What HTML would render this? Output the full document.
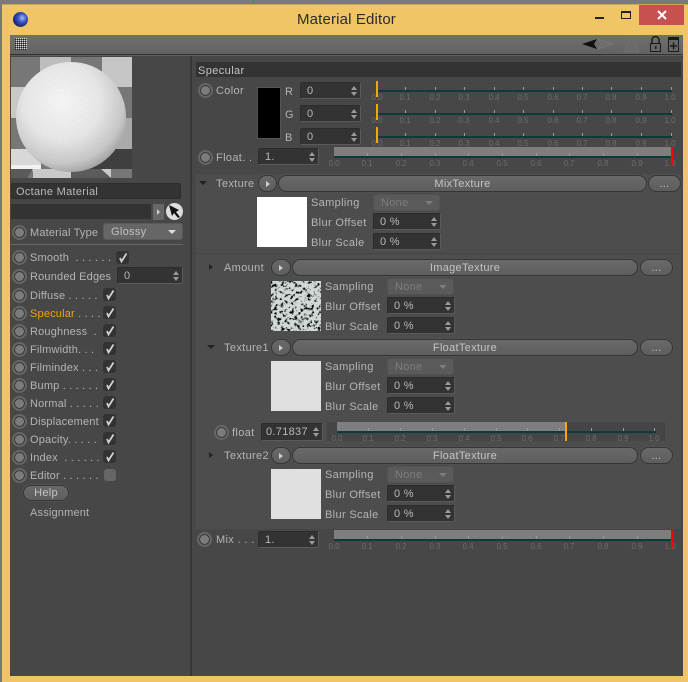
<!DOCTYPE html>
<html><head><meta charset="utf-8"><style>
html,body{margin:0;padding:0;background:#777}
#w{position:relative;width:688px;height:682px;overflow:hidden;background:#777;font:11px "Liberation Sans",sans-serif;color:#b4b4b4}
#w div,#w span{position:absolute;box-sizing:border-box}
.l{white-space:pre;line-height:14px;height:14px;letter-spacing:.35px;margin-top:1px}
.s{letter-spacing:.18px}
.r{width:15px;height:15px;border-radius:50%;background:#7c7c7c;border:2px solid #666;box-shadow:inset 0 0 0 1px #363636}
.f{background:#333;border:1px solid #2c2c2c;border-right-color:#5a5a5a;border-bottom-color:#5a5a5a;border-radius:2px;line-height:15px;padding-left:6px;padding-top:1px;color:#b8b8b8;letter-spacing:.3px}
.f i{position:absolute;right:3px;top:3px;width:0;height:0;border:3px solid transparent;border-top:0;border-bottom:4px solid #9a9a9a}
.f b{position:absolute;right:3px;top:9px;width:0;height:0;border:3px solid transparent;border-bottom:0;border-top:4px solid #9a9a9a}
.d{background:#5a5a5a;border:1px solid #525252;border-radius:3px;color:#7c7c7c;line-height:15px;padding-left:7px;padding-top:1px;letter-spacing:.3px}
.d i{position:absolute;right:6px;top:6px;width:0;height:0;border:4px solid transparent;border-bottom:0;border-top:4px solid #7c7c7c}
.p{background:linear-gradient(#696969,#5e5e5e);border:1px solid #363636;box-shadow:0 0 0 1px #505050;border-radius:9px;text-align:center;line-height:16px;color:#c4c4c4;letter-spacing:.3px;height:17px}
.o{background:linear-gradient(#696969,#5e5e5e);border:1px solid #363636;box-shadow:0 0 0 1px #505050;border-radius:9px;height:17px}
.o i{position:absolute;left:7px;top:5px;width:0;height:0;border:3px solid transparent;border-right:0;border-left:4px solid #ccc}
.c{width:13px;height:13px;background:#333;border-radius:3px}
.t1{width:0;height:0;border:3px solid transparent;border-right:0;border-left:4px solid #222}
.t2{width:0;height:0;border:4px solid transparent;border-bottom:0;border-top:4px solid #222}
</style></head><body><div id="w">
<div style="left:2px;top:4px;width:686px;height:678px;background:#efc566"></div>
<div style="left:0;top:0;width:688px;height:4px;background:#7a7a7a"></div>
<div style="left:2px;top:4px;width:686px;height:1px;background:#c9a455"></div>
<div style="left:253px;top:0;width:1px;height:4px;background:#3c8f3c"></div>
<div style="left:13px;top:12px;width:15px;height:15px;border-radius:50%;background:radial-gradient(circle at 62% 40%,#a8bcf5 0,#3550c0 35%,#18246a 72%,#d0d0e0 100%)"></div>
<div class="l" style="left:297px;top:10px;font-size:15px;line-height:18px;height:18px;color:#2b2b2b;letter-spacing:.15px">Material Editor</div>
<div style="left:595px;top:17px;width:9px;height:2px;background:#222"></div>
<div style="left:621px;top:11px;width:10px;height:8px;border:1px solid #222;border-top-width:2px"></div>
<div style="left:639px;top:5px;width:45px;height:20px;background:#c75050"></div>
<svg style="position:absolute;left:0;top:0" width="688" height="30"><path d="M658 11l8 8M666 11l-8 8" stroke="#fff" stroke-width="2"/></svg>

<div style="left:10px;top:35px;width:673px;height:641px;background:#474747"></div>
<div style="left:10px;top:35px;width:673px;height:19px;background:linear-gradient(#707070,#626262)"></div>
<div style="left:10px;top:54px;width:673px;height:1px;background:#333"></div>
<div style="left:10px;top:55px;width:673px;height:1px;background:#5c5c5c"></div>
<svg style="position:absolute;left:0;top:0" width="688" height="60">
<defs><pattern id="hd" width="2" height="2" patternUnits="userSpaceOnUse"><rect width="1" height="1" fill="#ddd"/><rect x="1" y="1" width="1" height="1" fill="#222"/></pattern></defs>
<rect x="15" y="38" width="12" height="12" fill="url(#hd)"/>
<path d="M582 44l15-5-3 5 3 5z" fill="#111"/>
<path d="M598 39l15 5-15 5 3-5z" fill="#6e6e6e" stroke="#757575"/>
<path d="M632 37l-8 15h15z" fill="#6a6a6a" stroke="#727272"/>
<path d="M652 43v-3a3.500 3.500 0 0 1 7 0v3" fill="none" stroke="#1c1c1c" stroke-width="1.500"/>
<rect x="650.500" y="43.500" width="10" height="8" fill="#666" stroke="#1c1c1c"/><rect x="655" y="46" width="1.500" height="3" fill="#1c1c1c"/>
<rect x="668.500" y="37.500" width="10" height="14" fill="#666" stroke="#1c1c1c"/><rect x="668" y="37" width="11" height="3" fill="#1c1c1c"/><path d="M670 46h7M673.500 42.500v7" stroke="#1c1c1c" stroke-width="1.500"/>
</svg>
<div style="left:190px;top:56px;width:2px;height:620px;background:#363636"></div>
<div style="left:196px;top:174px;width:485px;height:355px;background:#4d4d4d"></div>
<div style="left:196px;top:253px;width:485px;height:1px;background:#454545"></div>
<div style="left:196px;top:62px;width:485px;height:15px;background:#333"></div>
<div class="l" style="left:198px;top:63px;color:#c4c4c4;letter-spacing:.4px">Specular</div>

<svg style="position:absolute;left:11px;top:57px" width="121" height="121">
<defs>
<radialGradient id="sp" cx="42%" cy="36%" r="70%"><stop offset="0" stop-color="#f8f8f8"/><stop offset=".5" stop-color="#e8e8e8"/><stop offset=".8" stop-color="#c8c8c8"/><stop offset="1" stop-color="#949494"/></radialGradient>
<filter id="gn" x="0" y="0" width="100%" height="100%"><feTurbulence type="fractalNoise" baseFrequency=".9" numOctaves="2" seed="3"/><feColorMatrix values="0 0 0 0 .4 0 0 0 0 .4 0 0 0 0 .4 1.400 0 0 0 -.55"/><feComposite in2="SourceAlpha" operator="in"/></filter>
</defs>
<rect width="121" height="121" fill="#777"/>
<rect x="29" width="31" height="30" fill="#bdbdbd"/><rect x="91" width="30" height="30" fill="#c6c6c6"/>
<rect x="0" y="30" width="30" height="31" fill="#c8c8c8"/>
<rect x="91" y="61" width="30" height="31" fill="#aaa"/>
<rect x="0" y="92" width="30" height="22" fill="#d8d8d8"/><rect x="0" y="108" width="30" height="4" fill="#f2f2f2"/>
<rect x="60" y="92" width="61" height="20" fill="#3f3f3f"/>
<path d="M22 112h38v9H22zM90 112h31v9H100z" fill="#c9c9c9"/><path d="M0 112h22l-6 9H0zM60 112h30l10 9H60z" fill="#5b5b5b"/>
<rect x="100" y="112" width="21" height="9" fill="#777"/>
<circle cx="60" cy="60" r="55" fill="url(#sp)"/>
<circle cx="60" cy="60" r="55" filter="url(#gn)" opacity=".3"/>
</svg>

<div class="f" style="left:11px;top:183px;width:170px;height:16px;border-color:#2d2d2d;padding-left:4px;line-height:14px">Octane Material</div>
<div style="left:11px;top:204px;width:140px;height:15px;background:#333"></div>
<div style="left:153px;top:204px;width:11px;height:16px;background:#686868"><span style="left:4px;top:5px;width:0;height:0;border:3px solid transparent;border-right:0;border-left:3px solid #ccc"></span></div>
<div style="left:166px;top:203px;width:17px;height:17px;border-radius:50%;background:#ddd"></div>
<svg style="position:absolute;left:166px;top:203px" width="17" height="17"><path d="M3 2l10 5-3 2 4 5-2 1-4-5-2 3z" fill="#111"/></svg>

<div class="r" style="left:12px;top:225px"></div><div class="l s" style="left:30px;top:225px">Material Type</div>
<div class="d" style="left:103px;top:223px;width:80px;height:17px;background:#666;color:#c0c0c0;border-color:#5a5a5a">Glossy<i style="border-top-color:#ddd"></i></div>
<div style="left:10px;top:244px;width:173px;height:1px;background:#666"></div>

<div class="r" style="left:12px;top:250px"></div><div class="l s" style="left:30px;top:250px">Smooth  . . . . . .</div><div class="c" style="left:116px;top:251px"></div>
<div class="r" style="left:12px;top:269px"></div><div class="l s" style="left:30px;top:269px">Rounded Edges</div><div class="f" style="left:117px;top:267px;width:66px;height:17px">0<i></i><b></b></div>
<div class="r" style="left:12px;top:288px"></div><div class="l s" style="left:30px;top:288px">Diffuse . . . . .</div><div class="c" style="left:103px;top:288px"></div>
<div class="r" style="left:12px;top:306px"></div><div class="l s" style="left:30px;top:306px"><span style="position:static;color:#f0a010">Specular</span> . . . .</div><div class="c" style="left:103px;top:306px"></div>
<div class="r" style="left:12px;top:324px"></div><div class="l s" style="left:30px;top:324px">Roughness  .</div><div class="c" style="left:103px;top:324px"></div>
<div class="r" style="left:12px;top:342px"></div><div class="l s" style="left:30px;top:342px">Filmwidth. . .</div><div class="c" style="left:103px;top:342px"></div>
<div class="r" style="left:12px;top:360px"></div><div class="l s" style="left:30px;top:360px">Filmindex . . .</div><div class="c" style="left:103px;top:360px"></div>
<div class="r" style="left:12px;top:378px"></div><div class="l s" style="left:30px;top:378px">Bump . . . . . .</div><div class="c" style="left:103px;top:378px"></div>
<div class="r" style="left:12px;top:396px"></div><div class="l s" style="left:30px;top:396px">Normal . . . . .</div><div class="c" style="left:103px;top:396px"></div>
<div class="r" style="left:12px;top:414px"></div><div class="l s" style="left:30px;top:414px">Displacement</div><div class="c" style="left:103px;top:414px"></div>
<div class="r" style="left:12px;top:432px"></div><div class="l s" style="left:30px;top:432px">Opacity. . . . .</div><div class="c" style="left:103px;top:432px"></div>
<div class="r" style="left:12px;top:450px"></div><div class="l s" style="left:30px;top:450px">Index  . . . . . .</div><div class="c" style="left:103px;top:450px"></div>
<div class="r" style="left:12px;top:468px"></div><div class="l s" style="left:30px;top:468px">Editor . . . . . .</div><div class="c" style="left:104px;top:469px;width:12px;height:12px;background:#666"></div>
<div class="p" style="left:23px;top:485px;width:46px;height:16px;line-height:15px">Help</div>
<div class="l s" style="left:30px;top:505px">Assignment</div>

<svg style="position:absolute;left:0;top:0" width="688" height="500"><path d="M120 258l1.500 3.500 5-8M107 295l1.500 3.500 5-8M107 313l1.500 3.500 5-8M107 331l1.500 3.500 5-8M107 349l1.500 3.500 5-8M107 367l1.500 3.500 5-8M107 385l1.500 3.500 5-8M107 403l1.500 3.500 5-8M107 421l1.500 3.500 5-8M107 439l1.500 3.500 5-8M107 457l1.500 3.500 5-8" fill="none" stroke="#d0d0d0" stroke-width="1.800"/></svg>

<div class="r" style="left:198px;top:83px"></div><div class="l" style="left:216px;top:83px">Color</div>
<div style="left:257px;top:87px;width:24px;height:52px;background:#000;border:1px solid #555"></div>
<div class="l" style="left:285px;top:84px">R</div><div class="l" style="left:285px;top:107px">G</div><div class="l" style="left:285px;top:130px">B</div>
<div class="f" style="left:300px;top:82px;width:61px;height:17px">0<i></i><b></b></div>
<div class="f" style="left:300px;top:105px;width:61px;height:17px">0<i></i><b></b></div>
<div class="f" style="left:300px;top:128px;width:61px;height:17px">0<i></i><b></b></div>
<div class="r" style="left:198px;top:150px"></div><div class="l" style="left:216px;top:150px">Float. .</div>
<div class="f" style="left:258px;top:148px;width:61px;height:17px">1.<i></i><b></b></div>

<svg style="position:absolute;left:0;top:0" width="688" height="682" font-family="Liberation Sans" font-size="8" fill="#6c6c6c" text-anchor="middle">
<g stroke="#0f3a3a" stroke-width="2"><path d="M377 91h295M377 114h295M377 137h295M334 157h338M337 432h319M334 540h338"/></g>
<rect x="334" y="147" width="338" height="9" fill="#7e7e7e"/>
<rect x="327" y="422" width="338" height="19" fill="#454545"/>
<rect x="337" y="422" width="228" height="9" fill="#7e7e7e"/>
<path d="M337 432h319" stroke="#0f3a3a" stroke-width="2"/>
<rect x="334" y="530" width="338" height="9" fill="#7e7e7e"/>
<g stroke="#9a9a9a" fill="none"><path d="M405.500 87v3M435.500 87v3M464.500 87v3M494.500 87v3M523.500 87v3M553.500 87v3M582.500 87v3M611.500 87v3M641.500 87v3M671.500 87v3M405.500 110v3M435.500 110v3M464.500 110v3M494.500 110v3M523.500 110v3M553.500 110v3M582.500 110v3M611.500 110v3M641.500 110v3M671.500 110v3M405.500 133v3M435.500 133v3M464.500 133v3M494.500 133v3M523.500 133v3M553.500 133v3M582.500 133v3M611.500 133v3M641.500 133v3M671.500 133v3M367.500 153v3M401.500 153v3M435.500 153v3M468.500 153v3M502.500 153v3M536.500 153v3M569.500 153v3M603.500 153v3M637.500 153v3M368.500 428v3M400.500 428v3M432.500 428v3M464.500 428v3M496.500 428v3M527.500 428v3M559.500 428v3M591.500 428v3M623.500 428v3M654.500 428v3M367.500 536v3M401.500 536v3M435.500 536v3M468.500 536v3M502.500 536v3M536.500 536v3M569.500 536v3M603.500 536v3M637.500 536v3"/></g>
<text x="377" y="100">0.0</text><text x="405" y="100">0.1</text><text x="435" y="100">0.2</text><text x="464" y="100">0.3</text><text x="494" y="100">0.4</text><text x="523" y="100">0.5</text><text x="553" y="100">0.6</text><text x="582" y="100">0.7</text><text x="611" y="100">0.8</text><text x="641" y="100">0.9</text><text x="670" y="100">1.0</text>
<text x="377" y="123">0.0</text><text x="405" y="123">0.1</text><text x="435" y="123">0.2</text><text x="464" y="123">0.3</text><text x="494" y="123">0.4</text><text x="523" y="123">0.5</text><text x="553" y="123">0.6</text><text x="582" y="123">0.7</text><text x="611" y="123">0.8</text><text x="641" y="123">0.9</text><text x="670" y="123">1.0</text>
<text x="377" y="146">0.0</text><text x="405" y="146">0.1</text><text x="435" y="146">0.2</text><text x="464" y="146">0.3</text><text x="494" y="146">0.4</text><text x="523" y="146">0.5</text><text x="553" y="146">0.6</text><text x="582" y="146">0.7</text><text x="611" y="146">0.8</text><text x="641" y="146">0.9</text><text x="670" y="146">1.0</text>
<text x="334" y="166">0.0</text><text x="367" y="166">0.1</text><text x="401" y="166">0.2</text><text x="435" y="166">0.3</text><text x="468" y="166">0.4</text><text x="502" y="166">0.5</text><text x="536" y="166">0.6</text><text x="569" y="166">0.7</text><text x="603" y="166">0.8</text><text x="637" y="166">0.9</text><text x="670" y="166">1.0</text>
<text x="337" y="441">0.0</text><text x="368" y="441">0.1</text><text x="400" y="441">0.2</text><text x="432" y="441">0.3</text><text x="464" y="441">0.4</text><text x="496" y="441">0.5</text><text x="527" y="441">0.6</text><text x="559" y="441">0.7</text><text x="591" y="441">0.8</text><text x="623" y="441">0.9</text><text x="654" y="441">1.0</text>
<text x="334" y="549">0.0</text><text x="367" y="549">0.1</text><text x="401" y="549">0.2</text><text x="435" y="549">0.3</text><text x="468" y="549">0.4</text><text x="502" y="549">0.5</text><text x="536" y="549">0.6</text><text x="569" y="549">0.7</text><text x="603" y="549">0.8</text><text x="637" y="549">0.9</text><text x="670" y="549">1.0</text>
<rect x="376" y="81" width="2" height="16" fill="#f5a800"/><rect x="376" y="104" width="2" height="16" fill="#f5a800"/><rect x="376" y="127" width="2" height="16" fill="#f5a800"/>
<rect x="565" y="422" width="2" height="19" fill="#f5a800"/>
<rect x="671" y="147" width="2" height="18" fill="#f00"/><rect x="671" y="530" width="2" height="18" fill="#f00"/>
</svg>

<div class="t2" style="left:199px;top:181px"></div><div class="l" style="left:216px;top:176px">Texture</div>
<div class="o" style="left:258px;top:175px;width:19px"><i></i></div>
<div class="p" style="left:278px;top:175px;width:369px">MixTexture</div><div class="p" style="left:648px;top:175px;width:33px">...</div>
<div style="left:257px;top:197px;width:50px;height:50px;background:#fff"></div>
<div class="l" style="left:311px;top:195px">Sampling</div><div class="d" style="left:373px;top:194px;width:67px;height:17px">None<i></i></div>
<div class="l" style="left:311px;top:215px">Blur Offset</div><div class="f" style="left:373px;top:213px;width:68px;height:17px">0 %<i></i><b></b></div>
<div class="l" style="left:311px;top:235px">Blur Scale</div><div class="f" style="left:373px;top:233px;width:68px;height:17px">0 %<i></i><b></b></div>

<div class="t1" style="left:209px;top:264px"></div><div class="l" style="left:224px;top:260px">Amount</div>
<div class="o" style="left:271px;top:259px;width:20px"><i></i></div>
<div class="p" style="left:292px;top:259px;width:346px">ImageTexture</div><div class="p" style="left:640px;top:259px;width:33px">...</div>
<svg style="position:absolute;left:271px;top:281px" width="50" height="50"><defs><filter id="nz" x="0" y="0" width="100%" height="100%"><feTurbulence type="fractalNoise" baseFrequency=".3" numOctaves="4" seed="11"/><feColorMatrix values="0 0 0 0 0 0 0 0 0 0 0 0 0 0 0 5 0 0 0 -2.600"/><feComposite in2="SourceGraphic" operator="in"/></filter></defs><rect width="50" height="50" fill="#d2dad8"/><rect width="50" height="50" fill="#2f312d" filter="url(#nz)"/></svg>
<div class="l" style="left:325px;top:279px">Sampling</div><div class="d" style="left:387px;top:278px;width:67px;height:17px">None<i></i></div>
<div class="l" style="left:325px;top:299px">Blur Offset</div><div class="f" style="left:387px;top:297px;width:68px;height:17px">0 %<i></i><b></b></div>
<div class="l" style="left:325px;top:319px">Blur Scale</div><div class="f" style="left:387px;top:317px;width:68px;height:17px">0 %<i></i><b></b></div>

<div class="t2" style="left:207px;top:345px"></div><div class="l" style="left:224px;top:340px">Texture1</div>
<div class="o" style="left:271px;top:339px;width:20px"><i></i></div>
<div class="p" style="left:292px;top:339px;width:346px">FloatTexture</div><div class="p" style="left:640px;top:339px;width:33px">...</div>
<div style="left:271px;top:361px;width:50px;height:50px;background:#e0e0e0"></div>
<div class="l" style="left:325px;top:359px">Sampling</div><div class="d" style="left:387px;top:358px;width:67px;height:17px">None<i></i></div>
<div class="l" style="left:325px;top:379px">Blur Offset</div><div class="f" style="left:387px;top:377px;width:68px;height:17px">0 %<i></i><b></b></div>
<div class="l" style="left:325px;top:399px">Blur Scale</div><div class="f" style="left:387px;top:397px;width:68px;height:17px">0 %<i></i><b></b></div>

<div class="r" style="left:214px;top:425px"></div><div class="l" style="left:232px;top:425px">float</div>
<div class="f" style="left:261px;top:423px;width:62px;height:18px;padding-left:4px">0.71837<i></i><b></b></div>

<div class="t1" style="left:209px;top:452px"></div><div class="l" style="left:224px;top:448px">Texture2</div>
<div class="o" style="left:271px;top:447px;width:20px"><i></i></div>
<div class="p" style="left:292px;top:447px;width:346px">FloatTexture</div><div class="p" style="left:640px;top:447px;width:33px">...</div>
<div style="left:271px;top:469px;width:50px;height:50px;background:#e0e0e0"></div>
<div class="l" style="left:325px;top:467px">Sampling</div><div class="d" style="left:387px;top:466px;width:67px;height:17px">None<i></i></div>
<div class="l" style="left:325px;top:487px">Blur Offset</div><div class="f" style="left:387px;top:485px;width:68px;height:17px">0 %<i></i><b></b></div>
<div class="l" style="left:325px;top:507px">Blur Scale</div><div class="f" style="left:387px;top:505px;width:68px;height:17px">0 %<i></i><b></b></div>

<div class="r" style="left:197px;top:532px"></div><div class="l" style="left:216px;top:532px">Mix . . .</div>
<div class="f" style="left:258px;top:531px;width:61px;height:17px">1.<i></i><b></b></div>
</div></body></html>
